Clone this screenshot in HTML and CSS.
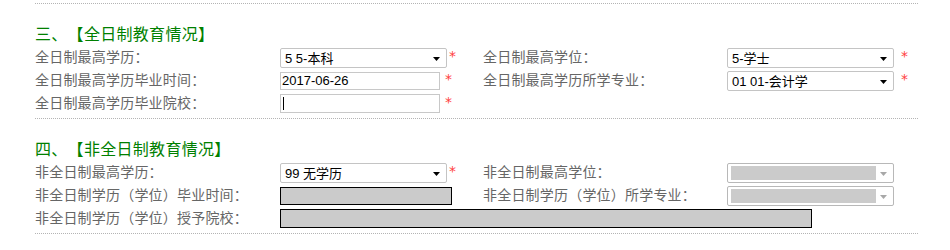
FILE: index.html
```html
<!DOCTYPE html>
<html lang="zh-CN">
<head>
<meta charset="utf-8">
<title>教育情况</title>
<link rel="stylesheet" href="styles.css">
</head>
<body>
<div class="page">
  <section class="sec">
    <h3 class="title">三、【全日制教育情况】</h3>
    <div class="grid">
      <div class="lbl">全日制最高学历：</div>
      <div class="field"><div class="sel">5 5-本科<svg class="arr" width="7" height="4" viewBox="0 0 7 4"><path d="M0 0H7L3.5 4Z"/></svg></div><span class="req">*</span></div>
      <div class="lbl">全日制最高学位：</div>
      <div class="field"><div class="sel">5-学士<svg class="arr" width="7" height="4" viewBox="0 0 7 4"><path d="M0 0H7L3.5 4Z"/></svg></div><span class="req r8">*</span></div>

      <div class="lbl">全日制最高学历毕业时间：</div>
      <div class="field"><div class="inp">2017-06-26</div><span class="req r6">*</span></div>
      <div class="lbl">全日制最高学历所学专业：</div>
      <div class="field"><div class="sel">01 01-会计学<svg class="arr" width="7" height="4" viewBox="0 0 7 4"><path d="M0 0H7L3.5 4Z"/></svg></div><span class="req r8">*</span></div>

      <div class="lbl">全日制最高学历毕业院校：</div>
      <div class="field"><div class="inp tall"><span class="caret"></span></div><span class="req r6">*</span></div>
    </div>
  </section>
  <section class="sec">
    <h3 class="title">四、【非全日制教育情况】</h3>
    <div class="grid">
      <div class="lbl">非全日制最高学历：</div>
      <div class="field"><div class="sel">99 无学历<svg class="arr" width="7" height="4" viewBox="0 0 7 4"><path d="M0 0H7L3.5 4Z"/></svg></div><span class="req">*</span></div>
      <div class="lbl">非全日制最高学位：</div>
      <div class="field"><div class="sel off"><span class="fill"></span><svg class="arr" width="7" height="4" viewBox="0 0 7 4"><path d="M0 0H7L3.5 4Z"/></svg></div></div>

      <div class="lbl">非全日制学历（学位）毕业时间：</div>
      <div class="field"><div class="gray short"></div></div>
      <div class="lbl">非全日制学历（学位）所学专业：</div>
      <div class="field"><div class="sel off"><span class="fill"></span><svg class="arr" width="7" height="4" viewBox="0 0 7 4"><path d="M0 0H7L3.5 4Z"/></svg></div></div>

      <div class="lbl">非全日制学历（学位）授予院校：</div>
      <div class="field span3"><div class="gray long"></div></div>
    </div>
  </section>
</div>
</body>
</html>
```
FILE: styles.css
```css
html, body {
  margin: 0;
  padding: 0;
  background: #fff;
}
body {
  font-family: "Noto Sans CJK SC", "Liberation Sans", sans-serif;
  font-size: 14px;
  color: #666;
  text-spacing-trim: space-all;
}
.page {
  margin: 3px 32px 0 35px;
  width: 883px;
}
.sec {
  border-top: 1px dotted #b4b4b4;
  padding: 18px 0 3px;
}
.sec:last-child {
  border-bottom: 1px dotted #b4b4b4;
}
.title {
  margin: 0 0 2px;
  height: 22px;
  line-height: 22px;
  font-size: 16px;
  font-weight: normal;
  color: #008000;
  letter-spacing: 0.3px;
}
.grid {
  display: grid;
  grid-template-columns: 245px 203px 244px 1fr;
  grid-auto-rows: 23px;
}
.lbl {
  display: flex;
  align-items: center;
  line-height: 16px;
  padding-bottom: 3px;
  white-space: nowrap;
  letter-spacing: 0.2px;
}
.field {
  display: flex;
  align-items: center;
}
.span3 {
  grid-column: span 3;
}
.sel {
  box-sizing: border-box;
  width: 167px;
  height: 20px;
  border: 1px solid #c4c4c4;
  border-radius: 2px;
  padding: 0 0 0 4px;
  display: flex;
  align-items: center;
  font-family: "Liberation Sans", "Noto Sans CJK SC", sans-serif;
  font-size: 13px;
  color: #000;
  position: relative;
}
.arr {
  position: absolute;
  right: 6px;
  top: 8px;
  fill: #000;
}
.sel.off {
  border-color: #b8b8b8;
  padding: 2px 3px;
}
.sel.off .fill {
  width: 145px;
  height: 14px;
  background: #cbcbcb;
}
.sel.off .arr {
  fill: #a8a8a8;
}
.inp {
  box-sizing: border-box;
  width: 160px;
  height: 18px;
  border: 1px solid #c8c8c8;
  padding: 0 0 0 1px;
  display: flex;
  align-items: center;
  font-family: "Liberation Sans", "Noto Sans CJK SC", sans-serif;
  font-size: 13px;
  color: #000;
}
.inp.tall {
  height: 19px;
}
.caret {
  width: 1px;
  height: 13px;
  background: #000;
  margin-left: 1px;
}
.req {
  color: #ff4040;
  font-family: "DejaVu Sans", sans-serif;
  font-size: 14px;
  line-height: 1;
  margin-left: 2px;
  align-self: flex-start;
  margin-top: 3px;
}
.req.r6 {
  margin-left: 5px;
}
.req.r8 {
  margin-left: 7px;
}
.gray {
  box-sizing: border-box;
  height: 18px;
  background: #cbcbcb;
  border: 1px solid #000;
}
.gray.short {
  width: 172px;
}
.gray.long {
  width: 532px;
  height: 19px;
}
```
